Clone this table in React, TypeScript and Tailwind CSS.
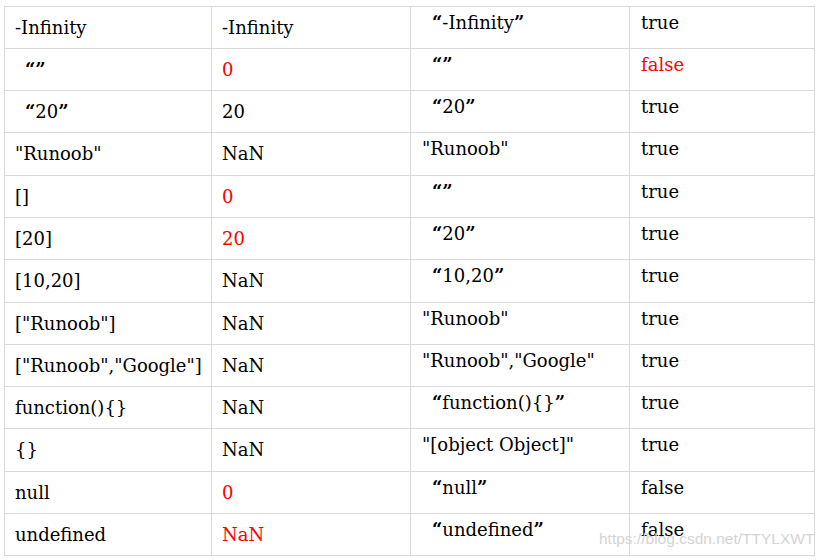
const RED = "text-[#ff0000]";

type Cell = { text: string; red?: boolean; indent?: boolean };

const rows: { h: string; cells: Cell[] }[] = [
  { h: "h-[42px]", cells: [{ text: "-Infinity" }, { text: "-Infinity" }, { text: "“-Infinity”", indent: true }, { text: "true" }] },
  { h: "h-[42px]", cells: [{ text: "“”", indent: true }, { text: "0", red: true }, { text: "“”", indent: true }, { text: "false", red: true }] },
  { h: "h-[42px]", cells: [{ text: "“20”", indent: true }, { text: "20" }, { text: "“20”", indent: true }, { text: "true" }] },
  { h: "h-[43px]", cells: [{ text: '"Runoob"' }, { text: "NaN" }, { text: '"Runoob"' }, { text: "true" }] },
  { h: "h-[42px]", cells: [{ text: "[]" }, { text: "0", red: true }, { text: "“”", indent: true }, { text: "true" }] },
  { h: "h-[42px]", cells: [{ text: "[20]" }, { text: "20", red: true }, { text: "“20”", indent: true }, { text: "true" }] },
  { h: "h-[43px]", cells: [{ text: "[10,20]" }, { text: "NaN" }, { text: "“10,20”", indent: true }, { text: "true" }] },
  { h: "h-[42px]", cells: [{ text: '["Runoob"]' }, { text: "NaN" }, { text: '"Runoob"' }, { text: "true" }] },
  { h: "h-[42px]", cells: [{ text: '["Runoob","Google"]' }, { text: "NaN" }, { text: '"Runoob","Google"' }, { text: "true" }] },
  { h: "h-[42px]", cells: [{ text: "function(){}" }, { text: "NaN" }, { text: "“function(){}”", indent: true }, { text: "true" }] },
  { h: "h-[43px]", cells: [{ text: "{}" }, { text: "NaN" }, { text: '"[object Object]"' }, { text: "true" }] },
  { h: "h-[42px]", cells: [{ text: "null" }, { text: "0", red: true }, { text: "“null”", indent: true }, { text: "false" }] },
  { h: "h-[42px]", cells: [{ text: "undefined" }, { text: "NaN", red: true }, { text: "“undefined”", indent: true }, { text: "false" }] },
];

const colW = ["w-[207px]", "w-[199px]", "w-[219px]", "w-[185px]"];

// curly quotes are heavier than the body text in the source table
function CellText({ text }: { text: string }) {
  const parts = text.split(/([“”])/);
  return (
    <>
      {parts.map((p, i) =>
        p === "“" || p === "”" ? (
          <span key={i} className="font-bold">
            {p}
          </span>
        ) : (
          <span key={i}>{p}</span>
        ),
      )}
    </>
  );
}

export default function App() {
  return (
    <div className="relative h-[560px] w-[835px] overflow-hidden bg-white pl-[4px] pt-[6px] font-['DejaVu_Serif',serif] text-[18px] leading-[20px] text-[#000]">
      <div className="flex w-fit flex-col border-b border-r border-[#d9d9d9]">
        {rows.map((row, r) => (
          <div key={r} className={`flex ${row.h}`}>
            {row.cells.map((cell, c) => (
              <div
                key={c}
                className={[
                  "shrink-0 whitespace-nowrap border-l border-t border-[#d9d9d9]",
                  colW[c],
                  c < 2 ? "pt-[11px]" : "pt-[6px]",
                  c === 0 ? (cell.indent ? "pl-[20px]" : "pl-[10px]") : "",
                  c === 1 ? "pl-[10px]" : "",
                  c === 2 ? (cell.indent ? "pl-[21px]" : "pl-[11px]") : "",
                  c === 3 ? "pl-[11px]" : "",
                  cell.red ? RED : "",
                ].join(" ")}
              >
                <CellText text={cell.text} />
              </div>
            ))}
          </div>
        ))}
      </div>
      <span className="absolute left-[599px] top-[530px] font-['Liberation_Sans',sans-serif] text-[15.5px] leading-[18px] text-[#d4d4d4]">
        https://blog.csdn.net/TTYLXWT
      </span>
    </div>
  );
}
